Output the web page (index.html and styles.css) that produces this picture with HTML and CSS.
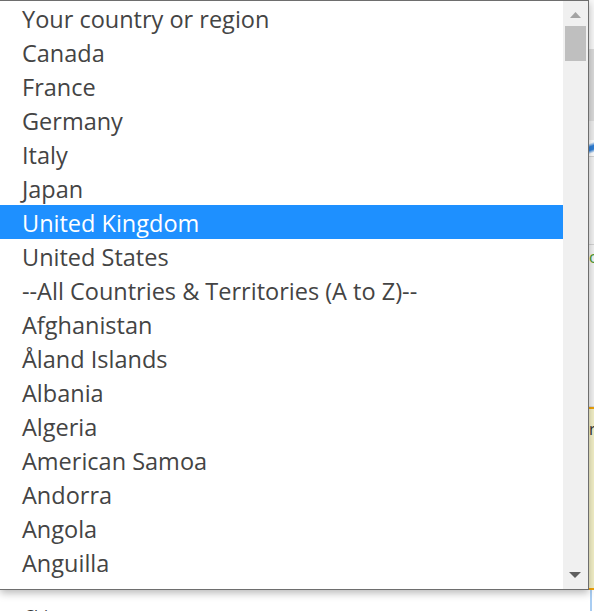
FILE: index.html
```html
<!DOCTYPE html>
<html lang="en">
<head>
<meta charset="utf-8">
<title>Country dropdown</title>
<link rel="stylesheet" href="styles.css">
</head>
<body>
<div class="screen">
  <div class="listbox">
    <ul class="options">
      <li class="opt">Your country or region</li>
      <li class="opt">Canada</li>
      <li class="opt">France</li>
      <li class="opt">Germany</li>
      <li class="opt">Italy</li>
      <li class="opt">Japan</li>
      <li class="opt selected">United Kingdom</li>
      <li class="opt">United States</li>
      <li class="opt">--All Countries &amp; Territories (A to Z)--</li>
      <li class="opt">Afghanistan</li>
      <li class="opt">Åland Islands</li>
      <li class="opt">Albania</li>
      <li class="opt">Algeria</li>
      <li class="opt">American Samoa</li>
      <li class="opt">Andorra</li>
      <li class="opt">Angola</li>
      <li class="opt">Anguilla</li>
      <li class="opt last">Antarctica</li>
    </ul>
    <div class="scrollbar">
      <svg class="arrow" width="25" height="24" viewBox="0 0 25 24"><polygon points="7,17 18,17 12.5,11" fill="#a3a3a3"/></svg>
      <div class="thumb"></div>
      <div class="track-fill"></div>
      <svg class="arrow" width="25" height="24" viewBox="0 0 25 24"><polygon points="6,7 18,7 12,13" fill="#5f5f5f"/></svg>
    </div>
  </div>
  <div class="side">
    <div class="side-top"></div>
    <div class="side-mark"></div>
    <div class="side-gap"></div>
    <div class="side-swoosh"></div>
    <div class="side-lines"></div>
    <div class="side-c">c</div>
    <div class="side-rest"></div>
    <div class="side-yellow"><span>r</span></div>
    <div class="side-bottom"></div>
  </div>
  <div class="below">
    <span class="below-text">Chinese</span>
  </div>
  <div class="below-side"></div>
</div>
</body>
</html>
```

FILE: styles.css
```css
html, body {
  margin: 0;
  padding: 0;
  background: #ffffff;
}

.screen {
  width: 594px;
  height: 611px;
  display: grid;
  grid-template-columns: 589px 5px;
  grid-template-rows: 590px 21px;
  overflow: hidden;
  font-family: "Open Sans", "Noto Sans", sans-serif;
}

.listbox {
  position: relative;
  z-index: 2;
  display: flex;
  background: #ffffff;
  border-top: 1px solid #6e6e6e;
  border-right: 1px solid #6e6e6e;
  border-bottom: 1px solid #6e6e6e;
  box-shadow: 0 3px 8px rgba(0, 0, 0, 0.28);
  overflow: hidden;
}

.options {
  list-style: none;
  margin: 0;
  padding: 0;
  width: 563px;
  flex: 0 0 563px;
  overflow: hidden;
}

.opt {
  height: 34px;
  line-height: 36px;
  padding-left: 22px;
  font-size: 23.5px;
  color: #444444;
  white-space: nowrap;
  overflow: hidden;
}

.opt.last {
  overflow: visible;
}

.opt.selected {
  background: #1e90ff;
  color: #ffffff;
}

.scrollbar {
  flex: 1;
  background: #f0f0f0;
  display: flex;
  flex-direction: column;
}

.arrow {
  display: block;
  flex: 0 0 24px;
}

.thumb {
  height: 35px;
  margin: 1px 2px 0 2px;
  background: #bfbfbf;
}

.track-fill {
  flex: 1;
}

.side {
  display: flex;
  flex-direction: column;
  background: #f4f4f4;
  overflow: hidden;
}

.side-top { height: 50px; background: #fafafa; }
.side-mark { height: 40px; background: #dcdcdc; border-top: 33px solid #dcdcdc; }
.side-gap { height: 20px; background: #efefef; }
.side-swoosh { height: 16px; background: linear-gradient(160deg, #ffffff 20%, #2f7fd6 40%, #2f7fd6 60%, #ffffff 80%); }
.side-lines {
  height: 90px;
  background: #f4f4f4;
  border-top: 1px solid #d4d4d4;
  border-bottom: 1px solid #d4d4d4;
}
.side-c { height: 24px; color: #4a9a2a; font-size: 16px; line-height: 24px; }
.side-rest { height: 140px; border-bottom: 1px solid #d8d8d8; }
.side-yellow {
  height: 184px;
  background: #f4f1c8;
  border-top: 2px solid #f0a30a;
  border-bottom: 2px solid #f0a30a;
  color: #333;
  font-size: 16px;
  line-height: 40px;
}
.side-bottom { flex: 1; }

.below {
  position: relative;
  z-index: 1;
  background: #ffffff;
  padding-left: 24px;
  overflow: hidden;
}

.below-text {
  display: block;
  margin-top: 16px;
  font-size: 16px;
  line-height: 20px;
  color: #333333;
}

.below-side {
  background: linear-gradient(90deg, #ffffff 0, #ffffff 1px, #a9cdf2 1px, #a9cdf2 3px, #ffffff 3px);
}
```
